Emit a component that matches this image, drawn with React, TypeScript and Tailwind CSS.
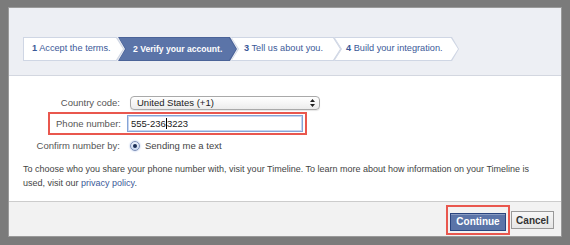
import React from 'react';

const font = { fontFamily: '"Liberation Sans", Arial, sans-serif' };

function Crumb({
  num,
  label,
  first,
  active,
  className,
  textClass,
}: {
  num: string;
  label: string;
  first?: boolean;
  active?: boolean;
  className: string;
  textClass: string;
}) {
  const clip = first
    ? '[clip-path:polygon(0_0,calc(100%_-_7px)_0,100%_50%,calc(100%_-_7px)_100%,0_100%)]'
    : '[clip-path:polygon(0_0,calc(100%_-_7px)_0,100%_50%,calc(100%_-_7px)_100%,0_100%,7px_50%)]';
  return (
    <div className={`relative h-[24px] ${className} ${clip} ${active ? 'bg-[#4b6398]' : 'bg-[#cfd6e4]'}`}>
      <div
        className={`absolute inset-[1px] flex items-center ${textClass} ${clip} ${
          active ? 'bg-[#5b74a8] text-white font-bold text-[8.6px]' : 'bg-white text-[#3b5998] text-[9.2px]'
        }`}
      >
        <span className="whitespace-nowrap">
          <span className="font-bold">{num}</span> {label}
        </span>
      </div>
    </div>
  );
}

export default function App() {
  return (
    <div className="w-[570px] h-[245px] bg-[#7b7b7b] overflow-hidden pt-[7px] pl-[8px]" style={font}>
      <div className="w-[554px] h-[230px] bg-white border border-[#9a9a9a] flex flex-col">
        {/* Header with steps */}
        <div className="h-[68px] bg-[#edeff4] border-b border-[#d3d7e0] pl-[14px] pt-[29px]">
          <div className="flex">
            <Crumb num="1" label="Accept the terms." first className="w-[101px]" textClass="pl-[8px]" />
            <Crumb num="2" label="Verify your account." active className="-ml-[6px] w-[119px]" textClass="pl-[14px]" />
            <Crumb num="3" label="Tell us about you." className="-ml-[6px] w-[110px]" textClass="pl-[12px]" />
            <Crumb num="4" label="Build your integration." className="-ml-[7px] w-[125px]" textClass="pl-[11px]" />
          </div>
        </div>

        {/* Form */}
        <div className="text-[9.5px] text-[#333]">
          <div className="flex items-center mt-[20px]">
            <div className="w-[111px] text-right text-[#555]">Country code:</div>
            <div className="ml-[10px] w-[190px] h-[14px] rounded-[4px] border border-[#a9a9a9] bg-gradient-to-b from-white to-[#ececec] flex items-center justify-between pl-[6px] pr-[4px] shadow-[0_1px_1px_rgba(0,0,0,0.1)]">
              <span className="text-[#222]">United States (+1)</span>
              <svg width="5" height="8" viewBox="0 0 5 8">
                <path d="M2.5 0 L5 3 L0 3 Z M2.5 8 L5 5 L0 5 Z" fill="#222" />
              </svg>
            </div>
          </div>

          <div className="flex items-center ml-[39px] mt-[2px] w-[259px] h-[23px] border-2 border-[#e9574e] bg-white">
            <div className="w-[71px] text-right text-[#555]">Phone number:</div>
            <div className="ml-[6px] w-[176px] h-[17px] border border-[#86a4d6] shadow-[inset_0_0_0_1px_#c6d6f0] flex items-center pl-[3px] text-[#222]">
              <span>555-236</span>
              <span className="w-px h-[11px] bg-black" />
              <span>3223</span>
            </div>
          </div>

          <div className="flex items-center mt-[6px] h-[10px]">
            <div className="w-[111px] text-right text-[#555]">Confirm number by:</div>
            <div className="ml-[10px] w-[10px] h-[10px] rounded-full border border-[#7d8fb8] bg-gradient-to-b from-[#eaf1fb] to-[#c9d9f1] flex items-center justify-center shadow-[0_0_2px_#9bb5e3]">
              <div className="w-[4px] h-[4px] rounded-full bg-[#1c2f55]" />
            </div>
            <div className="ml-[5px] text-[#444]">Sending me a text</div>
          </div>

          <p className="mt-[11px] px-[14px] leading-[14px] text-[9px] text-[#444] whitespace-nowrap">
            To choose who you share your phone number with, visit your Timeline. To learn more about how information on your Timeline is
            <br />
            used, visit our <span className="text-[#3b5998]">privacy policy</span>.
          </p>
        </div>

        {/* Footer */}
        <div className="mt-auto h-[35px] bg-[#f2f2f2] border-t border-[#cccccc] flex items-center justify-end pr-[7px] pt-[2px]">
          <div className="border-2 border-[#e9574e] px-[2px] py-[1px]">
            <button className="h-[18px] w-[56px] bg-[#5b74a8] border border-[#29447e] text-white font-bold text-[10px] shadow-[inset_0_1px_0_#8a9cc2]">
              Continue
            </button>
          </div>
          <button className="ml-[1px] h-[18px] w-[43px] bg-gradient-to-b from-[#f7f7f7] to-[#e6e6e6] border border-[#999] text-[#333] font-bold text-[10px]">
            Cancel
          </button>
        </div>
      </div>
    </div>
  );
}
